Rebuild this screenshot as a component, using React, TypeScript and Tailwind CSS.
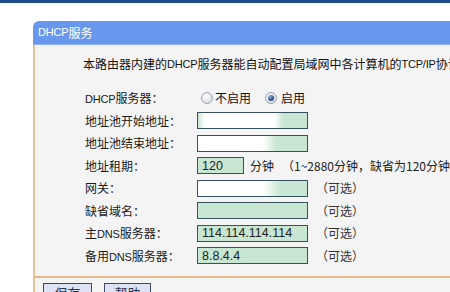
import React from "react";

const FONT = "font-['Noto_Sans_CJK_SC','Liberation_Sans',sans-serif]";

function L({ children }: { children: React.ReactNode }) {
  return <span className="font-['Liberation_Sans',sans-serif] text-[11px] tracking-[-0.2px]">{children}</span>;
}

function Field({
  value,
  w = "w-[111px]",
  bg = "bg-[#c8e6d2]",
}: {
  value?: string;
  w?: string;
  bg?: string;
}) {
  return (
    <div
      className={`${w} h-[17px] border border-[#36525e] ${bg} flex items-center pl-[4px] text-[12.5px] leading-none text-[#222] font-['Liberation_Sans',sans-serif]`}
    >
      {value}
    </div>
  );
}

function Radio({ checked }: { checked?: boolean }) {
  return (
    <span className="w-[12px] h-[12px] rounded-full border border-[#9aa6b2] bg-[radial-gradient(circle_at_40%_35%,#ffffff_0%,#dcdfe4_70%,#c4c9d0_100%)] flex items-center justify-center">
      {checked && (
        <span className="w-[6px] h-[6px] rounded-full bg-[radial-gradient(circle_at_35%_30%,#8fb0d8_0%,#2b4f86_60%,#1a3360_100%)]" />
      )}
    </span>
  );
}

function Row({ label, children }: { label: React.ReactNode; children: React.ReactNode }) {
  return (
    <div className="h-[22.5px] flex items-center">
      <div className="w-[112px] shrink-0 text-[12px] text-[#1a1a1a] whitespace-nowrap">{label}</div>
      <div className="flex items-center whitespace-nowrap">{children}</div>
    </div>
  );
}

function Opt() {
  return <span className="ml-[8px] text-[12px] text-[#333]">（可选）</span>;
}

export default function App() {
  return (
    <div className={`w-[450px] h-[292px] overflow-hidden bg-white ${FONT}`}>
      <div className="h-[3px] bg-[#1b4c8b]" />
      <div className="pt-[18px] pl-[33px]">
        <div className="w-[480px]">
          <div className="h-[24px] rounded-tl-[6px] bg-[#6898ee] text-white text-[12px] flex items-center pl-[5px] border-b border-[#8fb3f2]">
            <L>DHCP</L>服务
          </div>
          <div className="bg-[#f4f4f4] border-l-2 border-[#e8c398]">
            <div className="h-[38px] flex items-center pl-[48px] whitespace-nowrap text-[12px] text-[#111]">
              本路由器内建的<L>DHCP</L>服务器能自动配置局域网中各计算机的<L>TCP/IP</L>协议
            </div>
            <div className="pt-[4px] pl-[50px] pb-[9px] border-b-2 border-[#e8b888]">
              <Row label={<><L>DHCP</L>服务器：</>}>
                <span className="ml-[4px]">
                  <Radio />
                </span>
                <span className="ml-[2px] text-[12px] text-[#111]">不启用</span>
                <span className="ml-[14px]">
                  <Radio checked />
                </span>
                <span className="ml-[4px] text-[12px] text-[#111]">启用</span>
              </Row>
              <Row label="地址池开始地址：">
                <Field bg="bg-[linear-gradient(90deg,#c8e6d2_0%,#ffffff_6%,#ffffff_70%,#c8e6d2_78%)]" value="" />
              </Row>
              <Row label="地址池结束地址：">
                <Field bg="bg-[linear-gradient(90deg,#ffffff_0%,#ffffff_60%,#c8e6d2_72%)]" />
              </Row>
              <Row label="地址租期：">
                <Field w="w-[47px]" value="120" />
                <span className="ml-[6px] text-[12px] text-[#222]">分钟</span>
                <span className="ml-[8px] text-[12px] text-[#222]">（1~2880分钟，缺省为120分钟）</span>
              </Row>
              <Row label="网关：">
                <Field bg="bg-[linear-gradient(90deg,#ffffff_0%,#ffffff_60%,#c8e6d2_75%)]" />
                <Opt />
              </Row>
              <Row label="缺省域名：">
                <Field />
                <Opt />
              </Row>
              <Row label={<>主<L>DNS</L>服务器：</>}>
                <Field value="114.114.114.114" />
                <Opt />
              </Row>
              <Row label={<>备用<L>DNS</L>服务器：</>}>
                <Field value="8.8.4.4" />
                <Opt />
              </Row>
            </div>
            <div className="pt-[5px] pl-[8px] flex gap-[12px] h-[40px]">
              <button className="w-[49px] h-[20px] border border-[#3c4a66] bg-[#dfe2f4] text-[13px] text-[#2a3550] flex items-start justify-center leading-[18px]">
                保存
              </button>
              <button className="w-[47px] h-[20px] border border-[#3c4a66] bg-[#dfe2f4] text-[13px] text-[#2a3550] flex items-start justify-center leading-[18px]">
                帮助
              </button>
            </div>
          </div>
        </div>
      </div>
    </div>
  );
}
